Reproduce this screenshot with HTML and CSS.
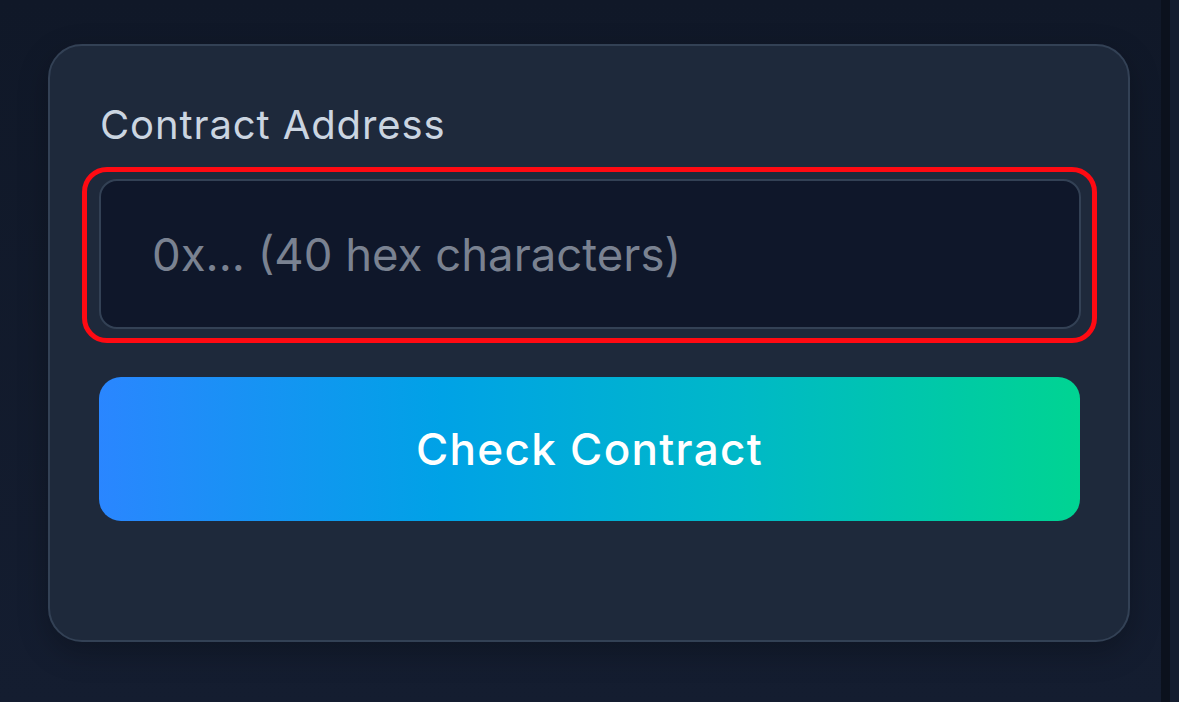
FILE: index.html
```html
<!DOCTYPE html>
<html>
<head>
<meta charset="utf-8">
<link rel="stylesheet" href="styles.css">
</head>
<body>
<div class="page">
  <main class="main">
    <section class="card">
      <label class="label" for="addr">Contract Address</label>
      <div class="ring">
        <input id="addr" class="input" type="text" placeholder="0x... (40 hex characters)">
      </div>
      <button class="btn" type="button">Check Contract</button>
    </section>
  </main>
  <div class="scroll"></div>
</div>
</body>
</html>
```

FILE: styles.css
```css
* { box-sizing: border-box; }
html, body { margin: 0; height: 100%; }
body {
  background: #111a2c;
  font-family: Inter, "Noto Sans", sans-serif;
  overflow: hidden;
}
.page {
  display: flex;
  height: 702px;
  width: 1179px;
}
.main {
  flex: 1;
  padding: 44px 31px 0 48px;
  background: linear-gradient(180deg, #101828 0%, #141d30 100%);
}
.scroll {
  width: 18px;
  display: flex;
  background: #141d2f;
  border-left: 9px solid #0b111d;
}
.card {
  height: 598px;
  background: #1e293b;
  border: 2px solid #334155;
  border-radius: 34px;
  padding: 55px 48px 0 49px;
  display: flex;
  flex-direction: column;
  box-shadow: 0 10px 30px rgba(0,0,0,0.25);
}
.label {
  color: #cbd5e1;
  font-size: 40px;
  line-height: 48px;
  font-weight: 400;
  letter-spacing: 0.9px;
  margin-left: 1px;
}
.ring {
  margin: 18px -17px 0 -17px;
  border: 5px solid #ff0a12;
  border-radius: 25px;
  padding: 7px 11px 9px 12px;
}
.input {
  display: block;
  width: 100%;
  height: 150px;
  background: #0f172a;
  border: 2px solid #334155;
  border-radius: 18px;
  padding: 0 51px;
  font-family: Inter, "Noto Sans", sans-serif;
  font-size: 45.5px;
  color: #e2e8f0;
  outline: none;
}
.input::placeholder { color: #7a8291; }
.btn {
  margin-top: 34px;
  height: 144px;
  border: 0;
  border-radius: 22px;
  background: linear-gradient(90deg, #2a86ff 0%, #00a2e6 35%, #00b8c8 65%, #00d492 100%);
  color: #ffffff;
  font-family: Inter, "Noto Sans", sans-serif;
  font-size: 44px;
  font-weight: 500;
  letter-spacing: 1.3px;
}
```
